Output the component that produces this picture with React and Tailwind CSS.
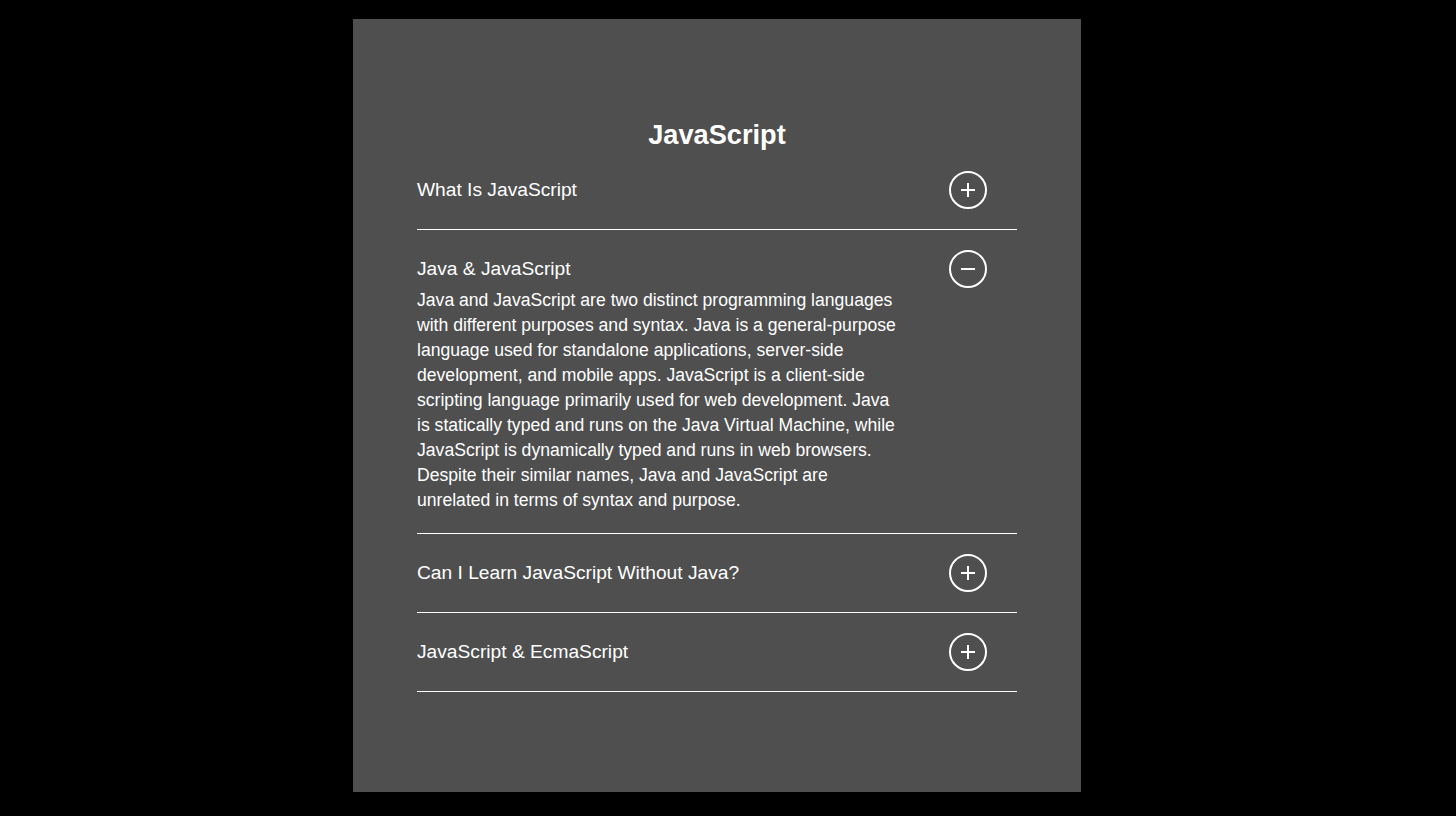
import { useState } from 'react';

const faqs = [
  {
    q: 'What Is JavaScript',
    a: 'JavaScript is a lightweight, interpreted programming language used to make web pages interactive.',
  },
  {
    q: 'Java & JavaScript',
    a: 'Java and JavaScript are two distinct programming languages with different purposes and syntax. Java is a general-purpose language used for standalone applications, server-side development, and mobile apps. JavaScript is a client-side scripting language primarily used for web development. Java is statically typed and runs on the Java Virtual Machine, while JavaScript is dynamically typed and runs in web browsers. Despite their similar names, Java and JavaScript are unrelated in terms of syntax and purpose.',
  },
  {
    q: 'Can I Learn JavaScript Without Java?',
    a: 'Yes. JavaScript does not depend on Java in any way, so you can learn it on its own.',
  },
  {
    q: 'JavaScript & EcmaScript',
    a: 'ECMAScript is the standard that JavaScript implements.',
  },
];

function ToggleIcon({ open }) {
  return (
    <svg width="38" height="38" viewBox="0 0 38 38" fill="none" stroke="white">
      <circle cx="19" cy="19" r="18" strokeWidth="2" />
      <line x1="12" y1="19" x2="26" y2="19" strokeWidth="2" />
      {!open && <line x1="19" y1="12" x2="19" y2="26" strokeWidth="2" />}
    </svg>
  );
}

export default function App() {
  const [openIndex, setOpenIndex] = useState(1);

  return (
    <div className="min-h-screen bg-black pt-[19px] font-['Liberation_Sans',Arial,sans-serif]">
      <div className="ml-[353px] w-[728px] h-[773px] bg-[#4f4f4f] px-16 pt-[100px] text-white">
        <h1 className="text-center text-[27.2px] font-bold leading-[32px]">JavaScript</h1>

        <div>
          {faqs.map((item, i) => {
            const open = openIndex === i;
            return (
              <div key={item.q} className="flex justify-between border-b border-white py-5">
                <div className="flex flex-col">
                  <button
                    type="button"
                    onClick={() => setOpenIndex(open ? -1 : i)}
                    className="flex h-[38px] items-center text-left text-[19.2px]"
                  >
                    {item.q}
                  </button>
                  {open && (
                    <p className="w-[482px] text-[17.6px] leading-[25px]">{item.a}</p>
                  )}
                </div>
                <button
                  type="button"
                  onClick={() => setOpenIndex(open ? -1 : i)}
                  className="mr-[30px] h-[38px] w-[38px] shrink-0"
                >
                  <ToggleIcon open={open} />
                </button>
              </div>
            );
          })}
        </div>
      </div>
    </div>
  );
}
